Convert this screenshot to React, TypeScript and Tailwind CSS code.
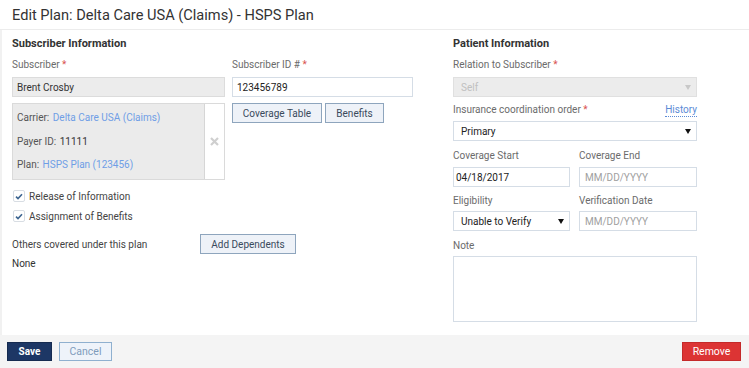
import React from "react";

const label = "text-[10px] leading-[14px] text-[#6b6b6b]";
const inputBox = "h-[20px] border flex items-center text-[10px]";
const btn =
  "h-[20px] border border-[#8ea5bd] bg-[#eef2f8] text-[10px] text-[#3a4a5c] flex items-center justify-center";

function Req() {
  return <span className="text-[#d9534f]"> *</span>;
}

function Caret({ light }: { light?: boolean }) {
  return (
    <svg width="6" height="5" viewBox="0 0 6 5" className="ml-auto">
      <path d="M0 0 L6 0 L3 5 Z" fill={light ? "#c8c8c8" : "#111"} />
    </svg>
  );
}

function Check({ text }: { text: string }) {
  return (
    <div className="flex items-center h-[14px]">
      <div className="ml-[1px] w-[12px] h-[12px] border border-[#d8dde3] bg-white rounded-[2px] flex items-center justify-center">
        <svg width="8" height="7" viewBox="0 0 8 7">
          <path d="M1 3.6 L3 5.6 L7 1.2" stroke="#3d6591" strokeWidth="1.6" fill="none" />
        </svg>
      </div>
      <span className="ml-[4px] text-[10px] text-[#444]">{text}</span>
    </div>
  );
}

export default function App() {
  return (
    <div className="w-[749px] h-[368px] flex flex-col bg-white font-['Roboto',sans-serif] overflow-hidden">
      <div className="h-[30px] border-b border-[#ececec] pl-[12px] pt-[6px]">
        <h1 className="text-[14.6px] leading-[18px] text-[#333]">
          Edit Plan: Delta Care USA (Claims) - HSPS Plan
        </h1>
      </div>

      <div className="flex-1 flex border-l-2 border-[#f1f1f1] mr-[4px]">
        {/* left column */}
        <div className="w-[401px] ml-[10px] flex flex-col">
          <h2 className="mt-[6px] text-[11px] leading-[16px] font-bold text-[#333]">
            Subscriber Information
          </h2>
          <div className="mt-[6px] flex gap-[7px]">
            <div className="w-[213px] flex flex-col">
              <div className={label}>
                Subscriber
                <Req />
              </div>
              <div className={`${inputBox} mt-[5px] pl-[4px] bg-[#ececec] border-[#dcdcdc] text-[#333]`}>
                Brent Crosby
              </div>
            </div>
            <div className="flex-1 flex flex-col">
              <div className={label}>
                Subscriber ID #
                <Req />
              </div>
              <div className={`${inputBox} mt-[5px] pl-[4px] bg-white border-[#d5dde6] text-[#222]`}>
                123456789
              </div>
            </div>
          </div>

          <div className="mt-[6px] flex gap-[7px]">
            <div className="w-[213px] h-[77px] border border-[#dadada] flex">
              <div className="flex-1 bg-[#ebebeb] border-r border-[#d6d6d6] pl-[4px] flex flex-col justify-between py-[7px] text-[10px] leading-[14px] text-[#555]">
                <div>
                  Carrier: <span className="ml-[1px] text-[#6f9ee6]">Delta Care USA (Claims)</span>
                </div>
                <div>
                  Payer ID: <span className="ml-[1px] text-[#333]">11111</span>
                </div>
                <div>
                  Plan: <span className="ml-[1px] text-[#6f9ee6]">HSPS Plan (123456)</span>
                </div>
              </div>
              <div className="w-[19px] bg-white flex items-center justify-center">
                <svg width="9" height="9" viewBox="0 0 9 9">
                  <path d="M1 1 L8 8 M8 1 L1 8" stroke="#cfcfcf" strokeWidth="2.2" />
                </svg>
              </div>
            </div>
            <div className="flex gap-[3px] items-start">
              <div className={`${btn} w-[90px]`}>Coverage Table</div>
              <div className={`${btn} w-[59px]`}>Benefits</div>
            </div>
          </div>

          <div className="mt-[9px] flex flex-col gap-[6px]">
            <Check text="Release of Information" />
            <Check text="Assignment of Benefits" />
          </div>

          <div className="mt-[11px] flex items-end">
            <div className="w-[188px] text-[10px] leading-[14px] text-[#444] pb-[2px]">
              Others covered under this plan
            </div>
            <div className={`${btn} w-[96px]`}>Add Dependents</div>
          </div>
          <div className="mt-[3px] text-[10px] leading-[14px] text-[#333]">None</div>
        </div>

        {/* right column */}
        <div className="w-[244px] ml-[40px] flex flex-col">
          <h2 className="mt-[6px] text-[11px] leading-[16px] font-bold text-[#333]">
            Patient Information
          </h2>
          <div className={`${label} mt-[6px]`}>
            Relation to Subscriber
            <Req />
          </div>
          <div className={`${inputBox} mt-[5px] pl-[7px] pr-[5px] bg-[#ececec] border-[#e0e0e0] text-[#c0c0c0]`}>
            Self
            <Caret light />
          </div>

          <div className="mt-[6px] flex items-center">
            <div className={label}>
              Insurance coordination order
              <Req />
            </div>
            <span className="ml-auto text-[10px] leading-[13px] text-[#5b8bd6] border-b border-dotted border-[#5b8bd6]">
              History
            </span>
          </div>
          <div className={`${inputBox} mt-[4px] pl-[7px] pr-[5px] bg-white border-[#d5dde6] text-[#222]`}>
            Primary
            <Caret />
          </div>

          <div className="mt-[8px] flex gap-[9px]">
            <div className="w-[117px] flex flex-col">
              <div className={label}>Coverage Start</div>
              <div className={`${inputBox} mt-[4px] pl-[2px] bg-white border-[#d5dde6] text-[#222]`}>
                04/18/2017
              </div>
            </div>
            <div className="flex-1 flex flex-col">
              <div className={label}>Coverage End</div>
              <div className={`${inputBox} mt-[4px] pl-[5px] bg-white border-[#d5dde6] text-[#a0a0a0]`}>
                MM/DD/YYYY
              </div>
            </div>
          </div>

          <div className="mt-[7px] flex gap-[9px]">
            <div className="w-[117px] flex flex-col">
              <div className={label}>Eligibility</div>
              <div className={`${inputBox} mt-[3px] pl-[7px] pr-[5px] bg-white border-[#d5dde6] text-[#222]`}>
                Unable to Verify
                <Caret />
              </div>
            </div>
            <div className="flex-1 flex flex-col">
              <div className={label}>Verification Date</div>
              <div className={`${inputBox} mt-[3px] pl-[5px] bg-white border-[#d5dde6] text-[#a0a0a0]`}>
                MM/DD/YYYY
              </div>
            </div>
          </div>

          <div className={`${label} mt-[8px]`}>Note</div>
          <div className="mt-[3px] h-[66px] border border-[#d5dde6] bg-white" />
        </div>
      </div>

      <div className="h-[33px] bg-[#f4f4f4] flex items-center px-[7px]">
        <div className="w-[45px] h-[19px] bg-[#1d3765] border border-[#162b50] text-white text-[10px] font-bold flex items-center justify-center">
          Save
        </div>
        <div className="ml-[7px] w-[53px] h-[19px] bg-[#eef3fa] border border-[#8fb0cf] text-[#7f9cbc] text-[10.5px] flex items-center justify-center">
          Cancel
        </div>
        <div className="ml-auto mr-[1px] w-[59px] h-[19px] bg-[#dc3434] border border-[#c42a2a] text-white text-[10.5px] flex items-center justify-center">
          Remove
        </div>
      </div>
    </div>
  );
}
